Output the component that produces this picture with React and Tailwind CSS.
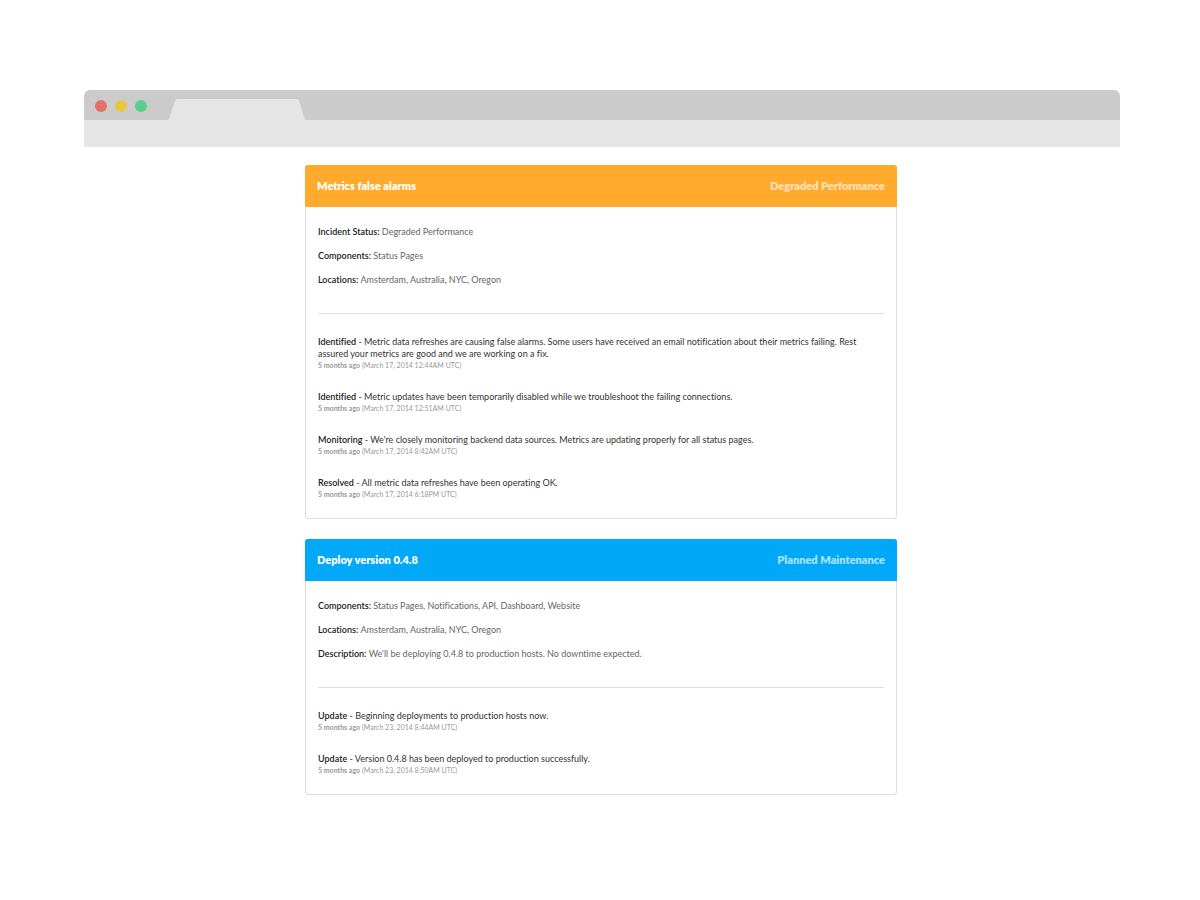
import React from 'react';

const INCIDENTS = [
    {
        title: 'Metrics false alarms',
        status: 'Degraded Performance',
        header: 'bg-[#ffaa2c]',
        details: [
            ['Incident Status', 'Degraded Performance'],
            ['Components', 'Status Pages'],
            ['Locations', 'Amsterdam, Australia, NYC, Oregon'],
        ],
        updates: [
            {
                state: 'Identified',
                text: 'Metric data refreshes are causing false alarms. Some users have received an email notification about their metrics failing. Rest assured your metrics are good and we are working on a fix.',
                ago: '5 months ago',
                date: 'March 17, 2014 12:44AM UTC',
            },
            {
                state: 'Identified',
                text: 'Metric updates have been temporarily disabled while we troubleshoot the failing connections.',
                ago: '5 months ago',
                date: 'March 17, 2014 12:51AM UTC',
            },
            {
                state: 'Monitoring',
                text: "We're closely monitoring backend data sources. Metrics are updating properly for all status pages.",
                ago: '5 months ago',
                date: 'March 17, 2014 8:42AM UTC',
            },
            {
                state: 'Resolved',
                text: 'All metric data refreshes have been operating OK.',
                ago: '5 months ago',
                date: 'March 17, 2014 6:18PM UTC',
            },
        ],
    },
    {
        title: 'Deploy version 0.4.8',
        status: 'Planned Maintenance',
        header: 'bg-[#00a8f7]',
        details: [
            ['Components', 'Status Pages, Notifications, API, Dashboard, Website'],
            ['Locations', 'Amsterdam, Australia, NYC, Oregon'],
            ['Description', "We'll be deploying 0.4.8 to production hosts. No downtime expected."],
        ],
        updates: [
            {
                state: 'Update',
                text: 'Beginning deployments to production hosts now.',
                ago: '5 months ago',
                date: 'March 23, 2014 8:44AM UTC',
            },
            {
                state: 'Update',
                text: 'Version 0.4.8 has been deployed to production successfully.',
                ago: '5 months ago',
                date: 'March 23, 2014 8:50AM UTC',
            },
        ],
    },
];

function BrowserBar() {
    return (
        <div className="rounded-t-md overflow-hidden">
            <div className="flex items-end h-[30px] bg-[#cbcbcb]">
                <div className="flex items-center gap-2 h-7 pl-[11px] pr-5">
                    <span className="size-3 rounded-full bg-[#e17066]" />
                    <span className="size-3 rounded-full bg-[#e6c645]" />
                    <span className="size-3 rounded-full bg-[#5bcd8b]" />
                </div>
                <svg width="140" height="21" viewBox="0 0 140 21" className="text-[#e5e5e5]" aria-hidden="true">
                    <path
                        d="M0 21C1.6 21 2.2 20 2.7 18.6L7.6 3C8.3 .9 9 0 11 0H129C131 0 131.7 .9 132.4 3L137.3 18.6C137.8 20 138.4 21 140 21Z"
                        fill="currentColor"
                    />
                </svg>
            </div>
            <div className="h-[27px] bg-[#e5e5e5]" />
        </div>
    );
}

function IncidentCard({ incident }) {
    return (
        <article className="rounded-[3px] border border-t-0 border-[#dedede] text-[9px] leading-[12px]">
            <header className={`${incident.header} -mx-px rounded-t-[3px] flex items-center justify-between h-[42px] px-3 text-[11px] font-extrabold`}>
                <h2 className="text-white">{incident.title}</h2>
                <span className="text-white/65">{incident.status}</span>
            </header>
            <div className="px-3 pt-[19px] pb-[17px]">
                <dl className="flex flex-col gap-3 pb-[27px] border-b border-[#dedede]">
                    {incident.details.map(([label, value]) => (
                        <div key={label}>
                            <dt className="inline font-semibold text-[#222]">{label}:</dt>{' '}
                            <dd className="inline text-[#666]">{value}</dd>
                        </div>
                    ))}
                </dl>
                <ul className="flex flex-col gap-5 pt-[22px] pb-px pr-5">
                    {incident.updates.map((update) => (
                        <li key={update.date}>
                            <p className="text-[#333]">
                                <strong className="font-semibold text-[#222]">{update.state}</strong> - {update.text}
                            </p>
                            <p className="text-[7px] leading-[11px] text-[#999]">
                                <span className="font-bold">{update.ago}</span> ({update.date})
                            </p>
                        </li>
                    ))}
                </ul>
            </div>
        </article>
    );
}

export default function App() {
    return (
        <div className="min-h-screen bg-white pt-[90px] pb-10 pl-1 font-['Lato',sans-serif] [font-variant-ligatures:none]">
            <div className="w-full max-w-[1036px] mx-auto">
                <BrowserBar />
                <main className="pt-[18px] pr-0.5">
                    <div className="w-full max-w-[592px] mx-auto flex flex-col gap-5">
                        {INCIDENTS.map((incident) => (
                            <IncidentCard key={incident.title} incident={incident} />
                        ))}
                    </div>
                </main>
            </div>
        </div>
    );
}
